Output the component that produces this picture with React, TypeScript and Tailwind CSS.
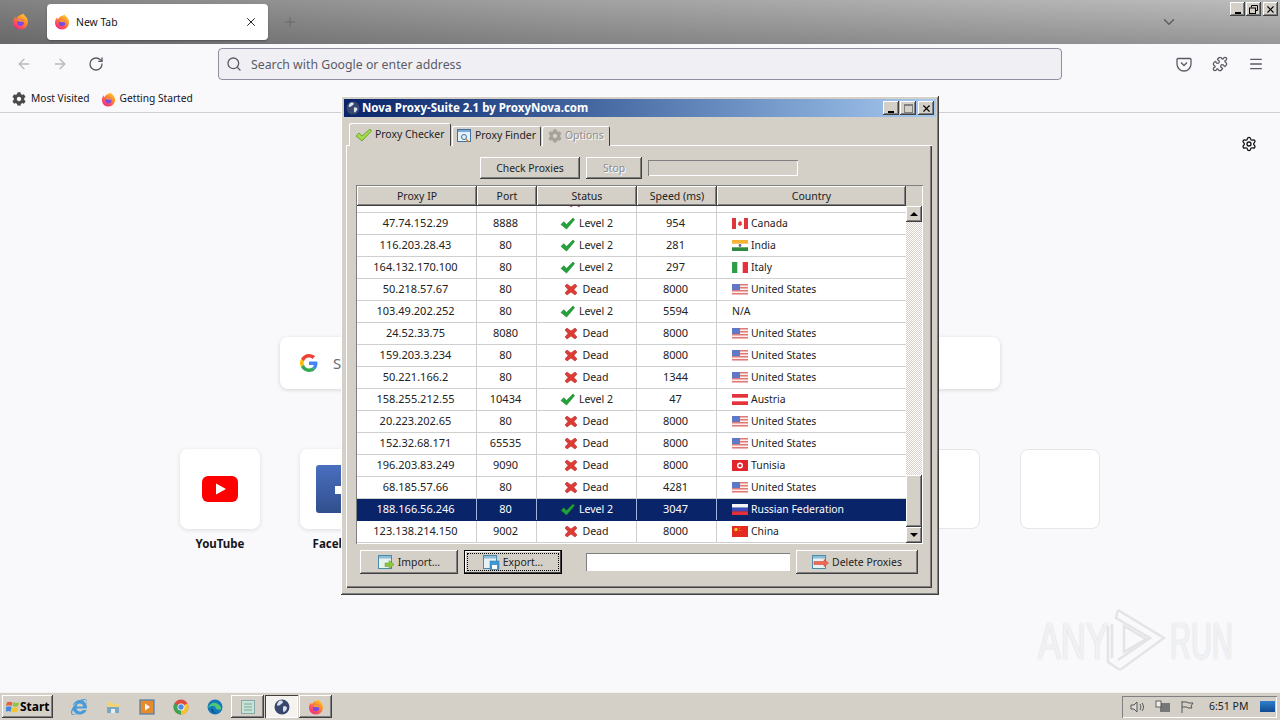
import React from 'react';
import { ArrowLeft, ArrowRight, RotateCw, Search, X, Plus, ChevronDown, Menu, Puzzle, Settings } from 'lucide-react';
import { FaCog, FaInternetExplorer } from 'react-icons/fa';

// Firefox logo, small
const FirefoxIcon: React.FC<{ size?: number; id: string }> = ({ size = 16, id }) => (
  <svg width={size} height={size} viewBox="0 0 32 32" className="shrink-0">
    <defs>
      <linearGradient id={id} x1="0.85" y1="0" x2="0.15" y2="1">
        <stop offset="0" stopColor="#ffd52f" />
        <stop offset="0.4" stopColor="#ff8a2b" />
        <stop offset="0.8" stopColor="#ff3f6c" />
        <stop offset="1" stopColor="#e31587" />
      </linearGradient>
    </defs>
    <path d="M21 1c1 3 4 4 6 7 3 4 4 9 2 14-2 6-8 9-13 9C8 31 2 25 2 17c0-4 2-8 4-10 0 2 1 3 2 4 1-4 4-6 7-7 2-1 5-1 6-3z" fill={`url(#${id})`} />
    <circle cx="16" cy="18" r="6.500" fill="#7d4be0" />
    <path d="M10 15c2-3 5-4 8-3 3 1 5 3 5 6-2-2-4-2-6-2-3 0-5 0-7-1z" fill="#ff9a2e" />
  </svg>
);

const GoogleIcon = () => (
  <svg width="18" height="18" viewBox="0 0 48 48">
    <path fill="#EA4335" d="M24 9.5c3.5 0 6.7 1.2 9.2 3.6l6.9-6.9C35.9 2.4 30.5 0 24 0 14.6 0 6.5 5.4 2.6 13.2l8 6.2C12.5 13.7 17.800 9.500 24 9.500z" />
    <path fill="#4285F4" d="M46.500 24.500c0-1.600-.1-3.100-.4-4.500H24v9h12.700c-.5 2.900-2.200 5.400-4.700 7.100l7.700 6c4.500-4.200 6.800-10.300 6.800-17.600z" />
    <path fill="#FBBC05" d="M10.600 28.600c-.5-1.400-.8-3-.8-4.600s.3-3.200.8-4.600l-8-6.200C.9 16.500 0 20.100 0 24s.9 7.500 2.600 10.800l8-6.200z" />
    <path fill="#34A853" d="M24 48c6.500 0 11.900-2.100 15.900-5.900l-7.700-6c-2.200 1.400-5 2.300-8.200 2.300-6.200 0-11.500-4.200-13.400-9.800l-8 6.200C6.500 42.600 14.600 48 24 48z" />
  </svg>
);

const PassIcon = () => (
  <svg width="15" height="13" viewBox="0 0 16 14" className="shrink-0">
    <path d="M1 8l3-3 3 3 7-7 1.500 2L7 13z" fill="#22a33a" stroke="#0f7a25" strokeWidth="0.6" />
  </svg>
);

const DeadIcon = () => (
  <svg width="14" height="13" viewBox="0 0 14 13" className="shrink-0">
    <path d="M1 3l2-2 4 3 4-3 2 2-3 3.500 3 3.500-2 2-4-3-4 3-2-2 3-3.500z" fill="#dc3b36" stroke="#a82522" strokeWidth="0.5" />
  </svg>
);

const Flag: React.FC<{ code: string }> = ({ code }) => {
  const inner: Record<string, React.ReactNode> = {
    ca: (
      <>
        <rect width="16" height="11" fill="#fff" />
        <rect width="4" height="11" fill="#e0353a" />
        <rect x="12" width="4" height="11" fill="#e0353a" />
        <path d="M8 2.500l1 1.500 1-.3-.5 2 .8.500L8 8 5.700 6.700l.8-.5-.5-2 1 .3z" fill="#e0353a" />
      </>
    ),
    in: (
      <>
        <rect width="16" height="11" fill="#fff" />
        <rect width="16" height="3.700" fill="#f5b335" />
        <rect y="7.300" width="16" height="3.700" fill="#2e8b3d" />
        <circle cx="8" cy="5.500" r="1.400" fill="#5a6aa8" />
      </>
    ),
    it: (
      <>
        <rect width="16" height="11" fill="#fff" />
        <rect width="5.300" height="11" fill="#2e9e4a" />
        <rect x="10.700" width="5.300" height="11" fill="#e8303a" />
      </>
    ),
    us: (
      <>
        <rect width="16" height="11" fill="#fbeeee" />
        <rect width="16" height="1.500" fill="#df7a76" />
        <rect y="3" width="16" height="1.500" fill="#df7a76" />
        <rect y="6" width="16" height="1.500" fill="#df7a76" />
        <rect y="9" width="16" height="1.500" fill="#df7a76" />
        <rect width="8" height="6" fill="#5f78c8" />
      </>
    ),
    ru: (
      <>
        <rect width="16" height="3.700" fill="#f5f5f5" />
        <rect y="3.700" width="16" height="3.700" fill="#3d4cc0" />
        <rect y="7.300" width="16" height="3.700" fill="#e0303a" />
      </>
    ),
    cn: (
      <>
        <rect width="16" height="11" fill="#e32b22" />
        <circle cx="4" cy="3.500" r="1.700" fill="#f6d32d" />
        <circle cx="7.500" cy="2" r="0.500" fill="#f6d32d" />
        <circle cx="8" cy="4.500" r="0.500" fill="#f6d32d" />
      </>
    ),
    at: (
      <>
        <rect width="16" height="11" fill="#e5333c" />
        <rect y="3.700" width="16" height="3.600" fill="#fff" />
      </>
    ),
    tn: (
      <>
        <rect width="16" height="11" fill="#e2252b" />
        <circle cx="8" cy="5.500" r="3" fill="#fff" />
        <circle cx="8" cy="5.500" r="1.600" fill="#e2252b" />
      </>
    ),
  };
  return (
    <svg width="16" height="11" viewBox="0 0 16 11" className="shrink-0">
      {inner[code]}
    </svg>
  );
};

interface ProxyRow {
  ip: string;
  port: string;
  ok: boolean;
  speed: string;
  country: string;
  flag?: string;
}

const rows: ProxyRow[] = [
  { ip: '47.74.152.29', port: '8888', ok: true, speed: '954', country: 'Canada', flag: 'ca' },
  { ip: '116.203.28.43', port: '80', ok: true, speed: '281', country: 'India', flag: 'in' },
  { ip: '164.132.170.100', port: '80', ok: true, speed: '297', country: 'Italy', flag: 'it' },
  { ip: '50.218.57.67', port: '80', ok: false, speed: '8000', country: 'United States', flag: 'us' },
  { ip: '103.49.202.252', port: '80', ok: true, speed: '5594', country: 'N/A' },
  { ip: '24.52.33.75', port: '8080', ok: false, speed: '8000', country: 'United States', flag: 'us' },
  { ip: '159.203.3.234', port: '80', ok: false, speed: '8000', country: 'United States', flag: 'us' },
  { ip: '50.221.166.2', port: '80', ok: false, speed: '1344', country: 'United States', flag: 'us' },
  { ip: '158.255.212.55', port: '10434', ok: true, speed: '47', country: 'Austria', flag: 'at' },
  { ip: '20.223.202.65', port: '80', ok: false, speed: '8000', country: 'United States', flag: 'us' },
  { ip: '152.32.68.171', port: '65535', ok: false, speed: '8000', country: 'United States', flag: 'us' },
  { ip: '196.203.83.249', port: '9090', ok: false, speed: '8000', country: 'Tunisia', flag: 'tn' },
  { ip: '68.185.57.66', port: '80', ok: false, speed: '4281', country: 'United States', flag: 'us' },
  { ip: '188.166.56.246', port: '80', ok: true, speed: '3047', country: 'Russian Federation', flag: 'ru' },
  { ip: '123.138.214.150', port: '9002', ok: false, speed: '8000', country: 'China', flag: 'cn' },
];

const raised = 'bg-[#d4d0c8] shadow-[inset_-1px_-1px_0_#404040,inset_1px_1px_0_#fff,inset_-2px_-2px_0_#808080]';
const sunken = 'shadow-[inset_1px_1px_0_#808080,inset_-1px_-1px_0_#fff]';
const gridCols = 'grid grid-cols-[120px_60px_100px_80px_189px]';

const WinButton: React.FC<{ className?: string; children: React.ReactNode }> = ({ className = 'text-[#222]', children }) => (
  <button className={`${raised} flex items-center justify-center pt-[1px] text-[10.4px] ${className}`}>{children}</button>
);

const ImportIcon = () => (
  <svg width="17" height="15" viewBox="0 0 17 15" className="shrink-0">
    <rect x="0.500" y="0.500" width="13" height="13" fill="#e6f2ee" stroke="#4b8aa8" />
    <rect x="1" y="1" width="12" height="2.500" fill="#8cbcd6" />
    <path d="M7 8h4V5.500L16 9.500 11 14v-2.500H7z" fill="#8cc63f" stroke="#5d962a" strokeWidth="0.5" />
  </svg>
);

const ExportIcon = () => (
  <svg width="17" height="15" viewBox="0 0 17 15" className="shrink-0">
    <rect x="0.500" y="0.500" width="13" height="13" fill="#e6f2f6" stroke="#4b8aa8" />
    <rect x="1" y="1" width="12" height="2.500" fill="#8cbcd6" />
    <rect x="7" y="6" width="9" height="8.500" fill="#3d9ad6" stroke="#2a6f9e" strokeWidth="0.5" />
    <rect x="9" y="10" width="5" height="4" fill="#fff" />
  </svg>
);

const DeleteIcon = () => (
  <svg width="17" height="15" viewBox="0 0 17 15" className="shrink-0">
    <rect x="0.500" y="0.500" width="13" height="13" fill="#e6f2f6" stroke="#4b8aa8" />
    <rect x="1" y="1" width="12" height="2.500" fill="#8cbcd6" />
    <path d="M2 6.500h10V4.500L16.500 8 12 11.500V9.500H2z" fill="#ee6a55" stroke="#bf3d2c" strokeWidth="0.5" />
  </svg>
);

const GlobeIcon: React.FC<{ size?: number }> = ({ size = 14 }) => (
  <svg width={size} height={size} viewBox="0 0 16 16" className="shrink-0">
    <circle cx="8" cy="8" r="7.500" fill="#39466e" />
    <path d="M5 2c2-1 4 0 4 1s-2 2-3 3-3 1-3 0 1-3 2-4zM10 7c2 0 3 1 3 2s-2 4-3 4-1-2-1-3 0-3 1-3z" fill="#d9e2ee" />
  </svg>
);

const RestoreGlyph = () => (
  <svg width="9" height="9" viewBox="0 0 9 9" fill="none" stroke="#000">
    <path d="M2.500 2.500V.5h6v5H6.500" strokeWidth="1" />
    <rect x="0.500" y="3" width="6" height="5.500" strokeWidth="1" />
  </svg>
);

const ProxyWindow = () => (
  <div className="absolute left-[341px] top-[96px] flex h-[499px] w-[598px] flex-col bg-[#d4d0c8] px-[3px] pt-[3px] font-['Noto_Sans',sans-serif] text-[#222] shadow-[inset_-1px_-1px_0_#404040,inset_1px_1px_0_#fff,inset_-2px_-2px_0_#808080]">
    {/* title bar */}
    <div className="flex h-[18px] shrink-0 items-center gap-[2px] bg-gradient-to-r from-[#0a246a] to-[#a6caf0] pl-[2px] pr-[2px]">
      <GlobeIcon />
      <span className="text-[11.5px] font-bold leading-none text-white">Nova Proxy-Suite 2.1 by ProxyNova.com</span>
      <div className="ml-auto flex items-center">
        <div className={`${raised} flex h-[14px] w-[16px] items-end justify-center pb-[2px]`}>
          <span className="h-[2px] w-[6px] bg-black" />
        </div>
        <div className={`${raised} ml-[1px] flex h-[14px] w-[16px] items-center justify-center`}>
          <span className="h-[9px] w-[9px] border border-t-2 border-[#808080]" />
        </div>
        <div className={`${raised} ml-[2px] flex h-[14px] w-[16px] items-center justify-center`}>
          <X size={11} strokeWidth={2.5} color="#000" />
        </div>
      </div>
    </div>

    {/* tabs */}
    <div className="relative z-10 -mb-px mt-[6px] flex h-[23px] shrink-0 items-end pl-[5px]">
      <div className="flex h-[23px] w-[102px] items-center gap-[3px] rounded-t-[2px] bg-[#d4d0c8] pl-[6px] text-[10.4px] shadow-[inset_1px_1px_0_#fff,inset_-1px_0_0_#404040]">
        <svg width="17" height="14" viewBox="0 0 17 14" className="shrink-0">
          <path d="M1 8l3-3 3 3 8-7 1.500 2L7 13z" fill="#a6d84a" stroke="#5c9a23" strokeWidth="0.8" />
        </svg>
        Proxy Checker
      </div>
      <div className="ml-px flex h-[20px] w-[89px] items-center gap-[3px] rounded-t-[2px] bg-[#d4d0c8] pl-[5px] text-[10.4px] shadow-[inset_1px_1px_0_#fff,inset_-1px_0_0_#404040]">
        <svg width="15" height="14" viewBox="0 0 15 14" className="shrink-0">
          <rect x="0.500" y="0.500" width="13" height="12" fill="#e6f2f6" stroke="#3f6fa8" />
          <rect x="1" y="1" width="12" height="2" fill="#7fa8d6" />
          <circle cx="7" cy="8" r="2.500" fill="none" stroke="#3f6fa8" />
          <path d="M9 10l3 3" stroke="#c98a2e" strokeWidth="1.500" />
        </svg>
        Proxy Finder
      </div>
      <div className="ml-px flex h-[20px] w-[68px] items-center gap-[3px] rounded-t-[2px] bg-[#d4d0c8] pl-[6px] text-[10.4px] text-[#8d8d8d] shadow-[inset_1px_1px_0_#fff,inset_-1px_0_0_#404040] [text-shadow:1px_1px_0_#fff]">
        <FaCog size={14} color="#a5a29b" className="shrink-0" />
        Options
      </div>
    </div>

    {/* pane */}
    <div className="ml-[2px] mr-[4px] flex h-[443px] shrink-0 flex-col shadow-[inset_1px_1px_0_#fff,inset_-1px_-1px_0_#404040,inset_-2px_-2px_0_#808080]">
      <div className="mt-[12px] flex h-[22px] items-center pl-[134px]">
        <WinButton className="h-[22px] w-[100px] text-[#222]">Check Proxies</WinButton>
        <WinButton className="ml-[6px] h-[22px] w-[56px] text-[#8d8d8d] [text-shadow:1px_1px_0_#fff]">Stop</WinButton>
        <div className={`${sunken} ml-[6px] h-[16px] w-[150px]`} />
      </div>

      {/* table */}
      <div className={`${sunken} mx-[10px] mt-[6px] h-[359px] w-[567px] overflow-hidden p-[1px]`}>
        <div className="flex h-full">
          <div className="flex w-[549px] flex-col overflow-hidden bg-white">
            <div className={`${gridCols} h-[20px] shrink-0 bg-[#d4d0c8] text-[10.5px]`}>
              {['Proxy IP', 'Port', 'Status', 'Speed (ms)', 'Country'].map((h) => (
                <div key={h} className={`${raised} flex items-center justify-center pt-[1px]`}>
                  {h}
                </div>
              ))}
            </div>
            <div className={`${gridCols} h-[7px] shrink-0 overflow-hidden border-b border-[#cfcfcf]`}>
              <div className="border-r border-[#cfcfcf]" />
              <div className="border-r border-[#cfcfcf]" />
              <div className="flex justify-center gap-[4px] border-r border-[#cfcfcf] pr-[24px]">
                <div className="-mt-[11px]">
                  <DeadIcon />
                </div>
              </div>
              <div className="border-r border-[#cfcfcf]" />
              <div />
            </div>
            {rows.map((r, i) => {
              const selected = i === 13;
              const cell = `flex items-center border-r ${selected ? 'border-[#9fb4d8]' : 'border-[#cfcfcf]'}`;
              return (
                <div
                  key={r.ip}
                  className={`${gridCols} h-[22px] shrink-0 border-b text-[11px] leading-none ${
                    selected ? 'border-[#0a246a] bg-[#0a246a] text-white' : 'border-[#cfcfcf]'
                  }`}
                >
                  <div className={`${cell} justify-center pb-[2px] pr-[2px]`}>{r.ip}</div>
                  <div className={`${cell} justify-center pb-[2px] pr-[2px]`}>{r.port}</div>
                  <div className={`${cell} justify-center gap-[4px] text-[10.6px]`}>
                    {r.ok ? <PassIcon /> : <DeadIcon />}
                    {r.ok ? 'Level 2' : 'Dead'}
                  </div>
                  <div className={`${cell} justify-center pb-[2px] pr-[2px]`}>{r.speed}</div>
                  <div className="flex items-center gap-[3px] pl-[15px] text-[10.4px]">
                    {r.flag && <Flag code={r.flag} />}
                    {r.country}
                  </div>
                </div>
              );
            })}
          </div>
          {/* scrollbar */}
          <div className="flex w-[16px] flex-col bg-[repeating-conic-gradient(#d4d0c8_0_25%,#fff_0_50%)] bg-[length:2px_2px]">
            <div className="h-[20px] shrink-0 bg-[#d4d0c8]" />
            <div className={`${raised} flex h-[16px] shrink-0 items-center justify-center`}>
              <span className="h-0 w-0 border-x-[4px] border-b-[4px] border-x-transparent border-b-black" />
            </div>
            <div className="mt-auto h-[52px] shrink-0" />
            <div className={`${raised} h-[52px] shrink-0`} />
            <div className={`${raised} flex h-[16px] shrink-0 items-center justify-center`}>
              <span className="h-0 w-0 border-x-[4px] border-t-[4px] border-x-transparent border-t-black" />
            </div>
          </div>
        </div>
      </div>

      {/* bottom buttons */}
      <div className="ml-[14px] mt-[6px] flex h-[24px] items-center">
        <WinButton className="h-[24px] w-[98px] gap-[3px] text-[#222]">
          <ImportIcon />
          Import...
        </WinButton>
        <div className="relative ml-[6px] h-[24px] w-[98px] bg-[#d4d0c8] shadow-[inset_0_0_0_1px_#000,inset_-2px_-2px_0_#404040,inset_2px_2px_0_#fff]">
          <div className="absolute inset-[3px] flex items-center justify-center gap-[3px] border border-dotted border-black pt-[1px] text-[10.4px]">
            <ExportIcon />
            Export...
          </div>
        </div>
        <div className={`${sunken} ml-[24px] h-[18px] w-[204px] bg-white`} />
        <WinButton className="ml-[6px] h-[24px] w-[122px] gap-[3px] text-[#222]">
          <DeleteIcon />
          Delete Proxies
        </WinButton>
      </div>
    </div>
  </div>
);

const Taskbar = () => (
  <div className="flex h-[28px] shrink-0 items-center border-t border-[#f4f2ee] bg-[#d4d0c8] pl-[2px] pr-[3px] font-['Noto_Sans',sans-serif]">
    <button className={`${raised} flex h-[23px] w-[51px] items-center pl-[4px] text-[12px] font-bold text-black`}>
      <svg width="14" height="14" viewBox="0 0 15 14" className="shrink-0">
        <path d="M1 2c2-1 4-1 6 0L6 6C4 5 2 5 0 6z" fill="#e8603c" />
        <path d="M8 2c2 1 4 1 6 0l-1 4c-2 1-4 1-6 0z" fill="#8cc63f" />
        <path d="M0 7c2-1 4-1 6 0l-1 5c-2-1-3-1-5 0z" fill="#3f8edb" />
        <path d="M7 7c2 1 4 1 6 0l-1 5c-2 1-4 1-6 0z" fill="#f4c430" />
      </svg>
      Start
    </button>
    <div className="ml-[18px] flex items-center gap-[18px]">
      <FaInternetExplorer size={16} color="#4a9ad8" />
      {/* explorer */}
      <svg width="16" height="16" viewBox="0 0 16 16">
        <path d="M2 3h5l1 2h6v9H2z" fill="#f2d37a" />
        <rect x="2" y="8" width="12" height="6" fill="#79a8c4" />
        <rect x="6" y="10" width="4" height="4" fill="#e8eef2" />
      </svg>
      {/* media player */}
      <svg width="16" height="16" viewBox="0 0 16 16">
        <rect x="1" y="1" width="14" height="14" fill="#e58a2e" stroke="#4a7fb0" strokeWidth="1.200" />
        <path d="M6 4.500l5 3.500-5 3.500z" fill="#fff" />
      </svg>
      {/* chrome */}
      <svg width="16" height="16" viewBox="0 0 16 16">
        <circle cx="8" cy="8" r="7.500" fill="#dd4a3e" />
        <path d="M8 8L1.500 4.300A7.500 7.500 0 0 0 8 15.500z" fill="#3ea352" />
        <path d="M8 8l6.500-3.700A7.500 7.500 0 0 1 8 15.500z" fill="#f3c531" />
        <circle cx="8" cy="8" r="3.500" fill="#fff" />
        <circle cx="8" cy="8" r="2.700" fill="#4a8ae8" />
      </svg>
      {/* edge */}
      <svg width="16" height="16" viewBox="0 0 16 16">
        <circle cx="8" cy="8" r="7.500" fill="#1378b8" />
        <path d="M1 9c1-4 5-6 8-5 3 1 5 3 5.500 6-2 1-5 1-6-1 1-2-4-3-7.500 0z" fill="#4cc77a" />
        <path d="M4 10c0 3 3 5 6 4-3 0-4-2-4-4z" fill="#0c4f86" />
      </svg>
    </div>
    <div className={`${raised} ml-[8px] flex h-[23px] w-[33px] items-center justify-center`}>
      <svg width="16" height="16" viewBox="0 0 16 16">
        <rect x="1.500" y="1.500" width="13" height="13" fill="#c9e2d6" stroke="#8aa" />
        <path d="M4 5h8M4 8h8M4 11h8" stroke="#7a9" />
      </svg>
    </div>
    <div className="ml-px flex h-[23px] w-[33px] items-center justify-center bg-[#f4f3ef] shadow-[inset_1px_1px_0_#404040,inset_-1px_-1px_0_#fff]">
      <GlobeIcon size={16} />
    </div>
    <div className={`${raised} ml-px flex h-[23px] w-[33px] items-center justify-center`}>
      <FirefoxIcon size={16} id="ff-task" />
    </div>
    <div className="ml-auto flex h-[22px] w-[155px] items-center pl-[8px] shadow-[inset_1px_1px_0_#808080,inset_-1px_-1px_0_#fff]">
      <svg width="16" height="14" viewBox="0 0 16 14" fill="none" stroke="#555">
        <path d="M1 5h3l3-3v10l-3-3H1z" fill="#ddd" />
        <path d="M10 4c1 2 1 4 0 6M12 3c2 3 2 5 0 8" />
      </svg>
      <svg width="16" height="14" viewBox="0 0 16 14" className="ml-[9px]">
        <rect x="5" y="3" width="10" height="9" fill="#777" />
        <rect x="1" y="1" width="5" height="6" fill="#eee" stroke="#444" strokeWidth="0.800" />
      </svg>
      <svg width="14" height="14" viewBox="0 0 14 14" className="ml-[9px]" fill="none" stroke="#555">
        <path d="M2 1v12M2 2h5l1 1h5l-2 3 1 2H8L7 7H2" />
      </svg>
      <span className="ml-[15px] text-[10.5px] text-[#222]">6:51 PM</span>
      <div className="ml-auto mr-[2px] h-[11px] w-[15px] bg-gradient-to-b from-[#2f7fd0] to-[#0f4a90]" />
    </div>
  </div>
);

const Tile: React.FC<{ label?: string; children?: React.ReactNode }> = ({ label, children }) => (
  <div className="flex w-[80px] flex-col items-center">
    <div
      className={`flex h-[80px] w-[80px] items-center justify-center rounded-lg bg-white ${
        children ? 'shadow-[0_1px_4px_rgba(0,0,0,0.12)]' : 'border border-[#e6e6e8]'
      }`}
    >
      {children}
    </div>
    {label && <span className="mt-[8px] text-[11.5px] font-bold leading-[14px] text-[#15141a]">{label}</span>}
  </div>
);

export default function App() {
  return (
    <div className="relative flex h-[720px] w-[1280px] flex-col overflow-hidden bg-[#f9f9fb] font-['Noto_Sans',sans-serif] text-[#15141a]">
      {/* tab strip */}
      <div className="flex h-[44px] shrink-0 items-start bg-[linear-gradient(to_bottom,rgba(0,0,0,0),rgba(0,0,0,0.2)),linear-gradient(to_right,#828282,#a2a2a2_45%,#bcbcbc)]">
        <div className="flex h-[40px] w-[40px] items-center justify-center pt-[2px]">
          <FirefoxIcon size={17} id="ff-corner" />
        </div>
        <div className="ml-[7px] mt-[4px] flex h-[36px] w-[221px] items-center rounded-[4px] bg-white pl-[7px] pr-[10px] shadow-[0_1px_2px_rgba(0,0,0,0.3)]">
          <FirefoxIcon size={16} id="ff-tab" />
          <span className="ml-[6px] pt-[2px] text-[10.4px]">New Tab</span>
          <X size={14} className="ml-auto" strokeWidth={1.6} />
        </div>
        <div className="ml-[14px] mt-[14px]">
          <Plus size={16} color="#6a6a6a" strokeWidth={1.5} />
        </div>
        <div className="ml-auto mr-[52px] mt-[13px]">
          <ChevronDown size={18} color="#5f5f5f" strokeWidth={2} />
        </div>
        <div className="mr-[2px] mt-[2px] flex">
          <div className={`${raised} flex h-[14px] w-[15px] items-end justify-center pb-[2px]`}>
            <span className="h-[2px] w-[6px] bg-black" />
          </div>
          <div className={`${raised} ml-px flex h-[14px] w-[15px] items-center justify-center`}>
            <RestoreGlyph />
          </div>
          <div className={`${raised} ml-[2px] flex h-[14px] w-[15px] items-center justify-center`}>
            <X size={11} strokeWidth={2.5} color="#000" />
          </div>
        </div>
      </div>

      {/* nav toolbar */}
      <div className="flex h-[40px] shrink-0 items-center bg-[#f9f9fb] pl-[16px] pr-[16px]">
        <ArrowLeft size={16} color="#b9b9bd" />
        <ArrowRight size={16} color="#b9b9bd" className="ml-[20px]" />
        <RotateCw size={16} color="#5b5b66" className="ml-[20px]" />
        <div className="ml-[114px] flex h-[32px] w-[844px] items-center rounded-[4px] border border-[#8f8f9d] bg-[#f0f0f4] pl-[7px]">
          <Search size={16} color="#5b5b66" />
          <span className="ml-[9px] pt-[2px] text-[12.3px] text-[#5b5b66]">Search with Google or enter address</span>
        </div>
        <div className="ml-auto flex items-center gap-[20px]">
          <svg width="16" height="16" viewBox="0 0 16 16" fill="none" stroke="#5b5b66" strokeWidth="1.300">
            <path d="M2 2.500h12a1 1 0 0 1 1 1V8a7 7 0 0 1-14 0V3.500a1 1 0 0 1 1-1z" />
            <path d="M5 6.500l3 3 3-3" />
          </svg>
          <Puzzle size={16} color="#5b5b66" />
          <Menu size={16} color="#5b5b66" />
        </div>
      </div>

      {/* bookmarks */}
      <div className="flex h-[29px] shrink-0 items-center border-b border-[#cfcfd8] bg-[#f9f9fb] pl-[12px] pt-[2px] text-[10.2px]">
        <FaCog size={14} color="#4a4a4a" />
        <span className="ml-[5px]">Most Visited</span>
        <div className="ml-[11px]">
          <FirefoxIcon size={15} id="ff-bm" />
        </div>
        <span className="ml-[4px]">Getting Started</span>
      </div>

      {/* new tab page */}
      <div className="relative flex flex-1 flex-col items-center">
        <Settings size={16} color="#15141a" className="absolute right-[23px] top-[23px]" />
        <div className="mt-[224px] flex h-[52px] w-[720px] shrink-0 items-center rounded-lg bg-white pl-[20px] shadow-[0_1px_4px_rgba(0,0,0,0.15)]">
          <GoogleIcon />
          <span className="ml-[15px] text-[15px] text-[#6a6a72]">Search with Google or enter address</span>
        </div>
        <div className="mt-[60px] flex gap-[40px]">
          <Tile label="YouTube">
            <svg width="36" height="26" viewBox="0 0 36 26">
              <rect width="36" height="26" rx="6" fill="#f00" />
              <path d="M14 7.500l10 5.500-10 5.500z" fill="#fff" />
            </svg>
          </Tile>
          <Tile label="Facebook">
            <svg width="48" height="48" viewBox="0 0 48 48">
              <defs>
                <linearGradient id="fb-bg" x1="0" y1="0" x2="0" y2="1">
                  <stop offset="0" stopColor="#4a6fc0" />
                  <stop offset="1" stopColor="#314f8c" />
                </linearGradient>
              </defs>
              <rect width="48" height="48" rx="3" fill="url(#fb-bg)" />
              <path d="M19 21h7v-8a8 8 0 0 1 8-8h6v8h-5v8h6l-1 8h-5v19h-9V29h-7z" fill="#fff" />
            </svg>
          </Tile>
          <Tile />
          <Tile />
          <Tile />
          <Tile />
          <Tile />
          <Tile />
        </div>

        {/* watermark */}
        <div className="absolute left-[1038px] top-[495px] flex h-[66px] w-[200px] items-center text-[52px] leading-none text-[#f1f1f4] [text-shadow:0_0_2px_#d4d4d9]">
          <span className="w-[66px] origin-left scale-x-[0.66] font-['Liberation_Sans',sans-serif]">ANY</span>
          <svg width="62" height="66" viewBox="0 0 62 66" fill="none" stroke="#e4e4e8" strokeWidth="2.500" className="shrink-0">
            <path d="M4 18v36l12 8M8 16v34" />
            <path d="M14 2l46 28-44 32" />
            <path d="M14 2l-2 8 34 20-32 22" />
            <path d="M20 18v26l22-13z" />
          </svg>
          <span className="ml-[4px] w-[62px] origin-left scale-x-[0.56] font-['Liberation_Sans',sans-serif]">RUN</span>
        </div>
      </div>

      <Taskbar />
      <ProxyWindow />
    </div>
  );
}
